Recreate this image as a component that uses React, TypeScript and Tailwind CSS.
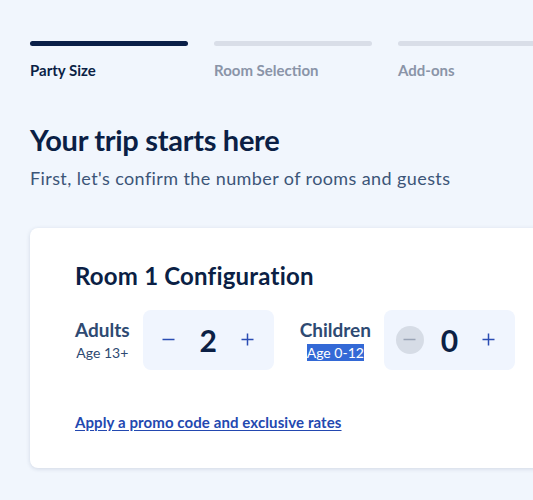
import React from "react";

const steps = [
	{ label: "Party Size", active: true },
	{ label: "Room Selection", active: false },
	{ label: "Add-ons", active: false },
];

interface StepperProps {
	value: number;
	canDecrease: boolean;
}

const Stepper: React.FC<StepperProps> = ({ value, canDecrease }) => {
	return (
		<div className="w-[131px] h-[60px] rounded-lg bg-[#f0f5fe] flex items-center px-3">
			<button
				className={
					canDecrease
						? "w-7 h-7 rounded-full flex items-center justify-center text-[#2a4cb3]"
						: "w-7 h-7 rounded-full flex items-center justify-center bg-[#d6dce6] text-[#9aa4b6]"
				}
			>
				<svg width="13" height="13" viewBox="0 0 13 13">
					<path d="M0.5 6.5h12" stroke="currentColor" strokeWidth="1.5" />
				</svg>
			</button>
			<span className="flex-1 text-center text-[30px] font-bold text-[#0b1f45] leading-none">{value}</span>
			<button className="w-7 h-7 rounded-full flex items-center justify-center text-[#2a4cb3]">
				<svg width="13" height="13" viewBox="0 0 13 13">
					<path d="M0.5 6.5h12M6.5 0.5v12" stroke="currentColor" strokeWidth="1.5" />
				</svg>
			</button>
		</div>
	);
};

export default function App() {
	return (
		<div className="w-[533px] h-[500px] overflow-hidden bg-[#f1f6fd] font-['Lato',sans-serif]">
			<div className="pl-[30px] pt-[41px] w-[600px]">
				<div className="flex gap-[26px]">
					{steps.map((s) => (
						<div key={s.label} className="w-[158px] shrink-0">
							<div className={s.active ? "h-[5px] rounded-full bg-[#0a1f48]" : "h-[5px] rounded-full bg-[#d9dee8]"} />
							<div
								className={
									s.active
										? "mt-[13px] text-[15px] font-bold text-[#0b1f45]"
										: "mt-[13px] text-[15px] font-bold text-[#8a94a8]"
								}
							>
								{s.label}
							</div>
						</div>
					))}
				</div>

				<h1 className="mt-[40px] text-[29px] font-bold text-[#0b1f45] tracking-[-0.3px] leading-[36px]">
					Your trip starts here
				</h1>
				<p className="mt-[8px] text-[18px] text-[#3c5578] leading-[24px] tracking-[0.4px]">
					First, let's confirm the number of rooms and guests
				</p>

				<div className="mt-[38px] w-[560px] h-[240px] bg-white rounded-lg shadow-[0_1px_4px_rgba(30,50,90,0.15)] pl-[45px] pt-[33px]">
					<h2 className="text-[24px] font-bold text-[#0b1f45] leading-[30px] tracking-[0.2px]">Room 1 Configuration</h2>
					<div className="mt-[19px] flex items-center">
						<div className="flex items-center gap-[13px]">
							<div className="flex flex-col items-center">
								<span className="text-[19px] font-bold text-[#2e4a72] leading-[22px]">Adults</span>
								<span className="mt-[3px] text-[14px] text-[#2e4a72] leading-[17px]">Age 13+</span>
							</div>
							<Stepper value={2} canDecrease={true} />
						</div>
						<div className="ml-[26px] flex items-center gap-[13px]">
							<div className="flex flex-col items-center">
								<span className="text-[19px] font-bold text-[#2e4a72] leading-[22px]">Children</span>
								<span className="mt-[3px] text-[14px] text-white bg-[#3369d6] leading-[17px]">Age 0-12</span>
							</div>
							<Stepper value={0} canDecrease={false} />
						</div>
					</div>
					<a href="#" className="block mt-[41px] text-[15px] font-bold text-[#2348b0] underline underline-offset-2 tracking-[0.1px]">
						Apply a promo code and exclusive rates
					</a>
				</div>
			</div>
		</div>
	);
}
